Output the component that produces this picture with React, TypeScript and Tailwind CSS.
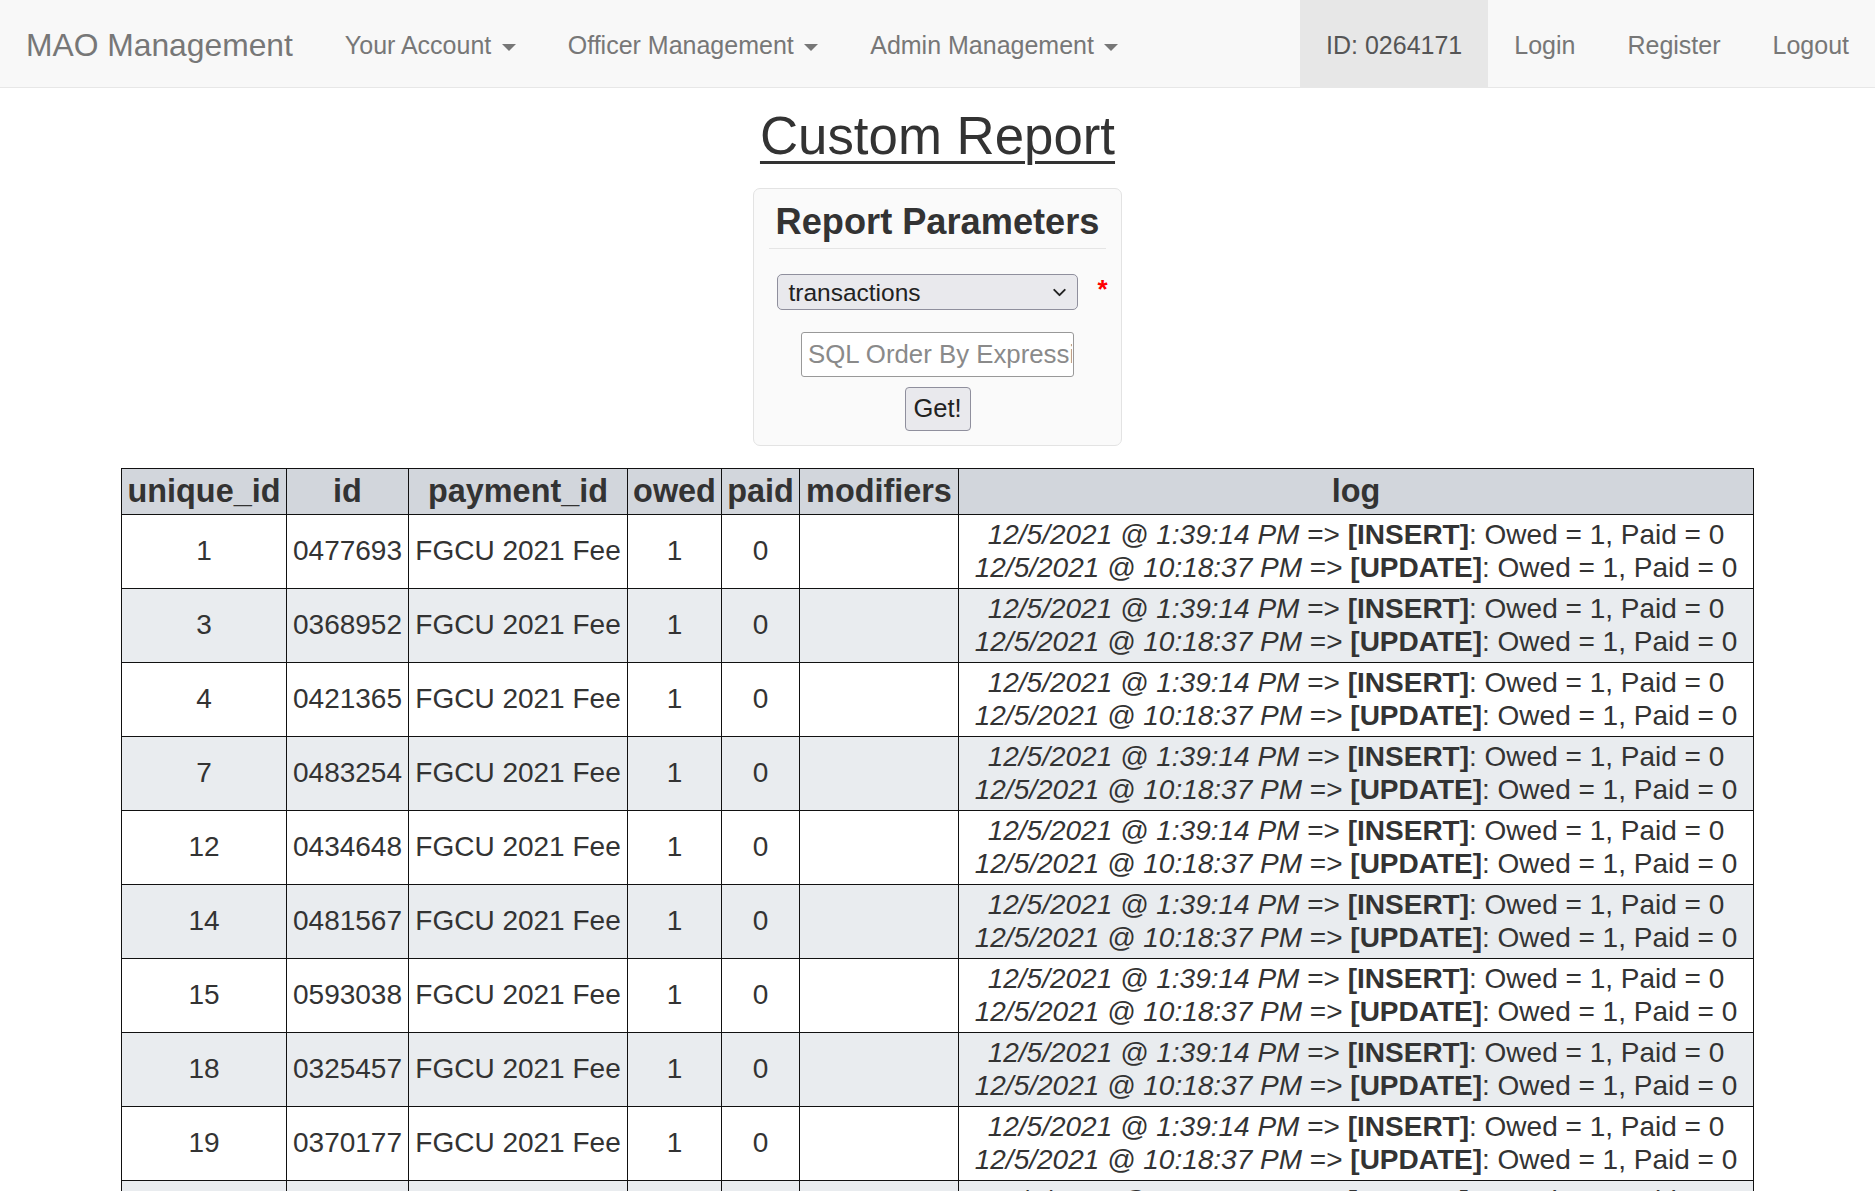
import { ChevronDown } from "lucide-react";

const ROWS: { uid: number; id: string }[] = [
  { uid: 1, id: "0477693" },
  { uid: 3, id: "0368952" },
  { uid: 4, id: "0421365" },
  { uid: 7, id: "0483254" },
  { uid: 12, id: "0434648" },
  { uid: 14, id: "0481567" },
  { uid: 15, id: "0593038" },
  { uid: 18, id: "0325457" },
  { uid: 19, id: "0370177" },
  { uid: 21, id: "0412290" },
];

const COLS = ["unique_id", "id", "payment_id", "owed", "paid", "modifiers", "log"];
const WIDTHS = [165, 122, 219, 94, 78, 159, 795];

function Caret() {
  return (
    <span className="ml-[3.5px] inline-block h-0 w-0 border-x-[7px] border-t-[7px] border-x-transparent border-t-[#777] align-middle" />
  );
}

function NavBar() {
  return (
    <nav className="flex h-[88px] items-stretch border-b border-[#e7e7e7] bg-[#f8f8f8] pt-[4px] text-[#777]">
      <a className="flex items-center px-[26px] text-[31.8px]">MAO Management</a>
      <ul className="flex items-stretch text-[25px]">
        <li className="flex items-center px-[26px]">
          <span>
            Your Account <Caret />
          </span>
        </li>
        <li className="flex items-center px-[26px]">
          <span>
            Officer Management <Caret />
          </span>
        </li>
        <li className="flex items-center px-[26px]">
          <span>
            Admin Management <Caret />
          </span>
        </li>
      </ul>
      <ul className="ml-auto flex items-stretch text-[25px]">
        <li className="-mt-[4px] flex items-center bg-[#e7e7e7] px-[26px] pt-[4px] text-[#555]">ID: 0264171</li>
        <li className="flex items-center px-[26px]">Login</li>
        <li className="flex items-center px-[26px]">Register</li>
        <li className="flex items-center px-[26px]">Logout</li>
      </ul>
    </nav>
  );
}

function LogCell() {
  return (
    <div className="leading-[33.5px]">
      <div>
        <i>12/5/2021 @ 1:39:14 PM</i> =&gt; <b>[INSERT]</b>: Owed = 1, Paid = 0
      </div>
      <div>
        <i>12/5/2021 @ 10:18:37 PM</i> =&gt; <b>[UPDATE]</b>: Owed = 1, Paid = 0
      </div>
    </div>
  );
}

export default function App() {
  return (
    <div className="min-h-screen bg-white font-['Liberation_Sans',Arial,sans-serif] text-[#333]">
      <NavBar />

      <h1 className="mt-[19px] text-center text-[52.8px] leading-[57px]">
        <span className="underline decoration-[3px] underline-offset-[7px]">Custom Report</span>
      </h1>

      <div className="mx-auto mt-[24px] w-[369px] rounded-[7px] border border-[#e3e3e3] bg-[#fafafa] px-[15px] pt-[14px] pb-[14px]">
        <h3 className="whitespace-nowrap text-center text-[36.2px] font-bold leading-[38.5px]">Report Parameters</h3>
        <hr className="mt-[6px] border-[#e5e5e5]" />

        <div className="mt-[25px] flex items-start justify-center pl-[10px]">
          <div className="relative">
            <select className="h-[36px] w-[301px] appearance-none rounded-[5px] border border-[#8f8f9d] bg-[#e9e9ed] pl-[10px] text-[24.5px] text-[#222]">
              <option>transactions</option>
            </select>
            <ChevronDown
              className="pointer-events-none absolute top-[8px] right-[8px] h-[21px] w-[21px] text-[#222]"
              strokeWidth={2.2}
            />
          </div>
          <span className="ml-[19px] mt-[2px] text-[26px] font-bold leading-[26px] text-[#ff0000]">*</span>
        </div>

        <div className="mt-[22px] flex justify-center">
          <input
            placeholder="SQL Order By Expression"
            className="h-[45px] w-[273px] rounded-[3px] border border-[#999] bg-white pr-[1px] pl-[6px] text-[25.8px] placeholder:text-[#8a8a8a]"
          />
        </div>

        <div className="mt-[10px] flex justify-center">
          <button className="h-[44px] w-[66px] rounded-[4px] border border-[#8f8f9d] bg-[#e9e9ed] text-[25.5px] text-[#222]">
            Get!
          </button>
        </div>
      </div>

      <table className="mx-auto mt-[22px] w-[1632px] table-fixed border-collapse text-center">
        <colgroup>
          {WIDTHS.map((w, i) => (
            <col key={i} style={{ width: w }} />
          ))}
        </colgroup>
        <thead>
          <tr className="h-[46px] bg-[#d2d6dc]">
            {COLS.map((c) => (
              <th key={c} className="border border-[#111] px-0 text-[32.4px] font-bold leading-[36px]">
                {c}
              </th>
            ))}
          </tr>
        </thead>
        <tbody className="text-[28px]">
          {ROWS.map((r, i) => (
            <tr key={r.uid} className={`h-[74px] ${i % 2 === 1 ? "bg-[#e9ecef]" : "bg-white"}`}>
              <td className="border border-[#111]">{r.uid}</td>
              <td className="border border-[#111]">{r.id}</td>
              <td className="whitespace-nowrap border border-[#111]">FGCU 2021 Fee</td>
              <td className="border border-[#111]">1</td>
              <td className="border border-[#111]">0</td>
              <td className="border border-[#111]"></td>
              <td className="border border-[#111]">
                <LogCell />
              </td>
            </tr>
          ))}
        </tbody>
      </table>
    </div>
  );
}
